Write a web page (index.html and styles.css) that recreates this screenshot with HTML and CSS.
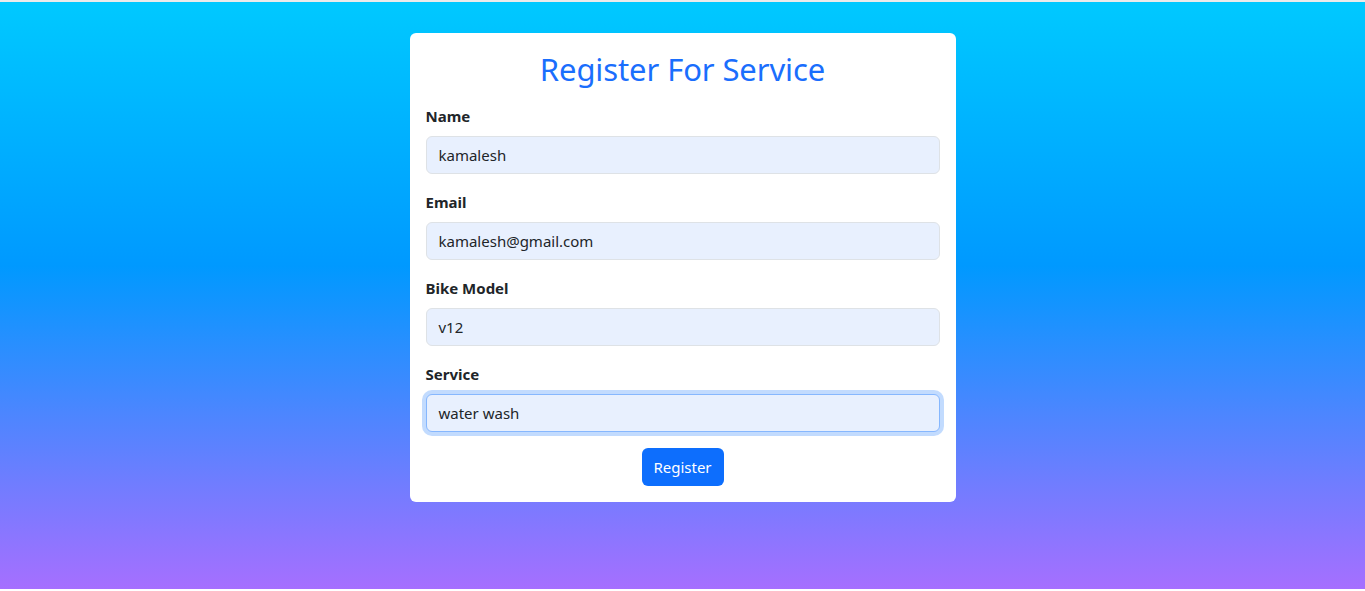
FILE: index.html
```html
<!DOCTYPE html>
<html lang="en">
<head>
<meta charset="utf-8">
<title>Register For Service</title>
<link rel="stylesheet" href="styles.css">
</head>
<body>
<div class="page">
  <form class="card">
    <h2 class="title">Register For Service</h2>
    <div class="group">
      <label class="label">Name</label>
      <div class="input">kamalesh</div>
    </div>
    <div class="group">
      <label class="label">Email</label>
      <div class="input">kamalesh@gmail.com</div>
    </div>
    <div class="group">
      <label class="label">Bike Model</label>
      <div class="input">v12</div>
    </div>
    <div class="group">
      <label class="label">Service</label>
      <div class="input focus">water wash</div>
    </div>
    <div class="actions">
      <button type="button" class="btn">Register</button>
    </div>
  </form>
</div>
</body>
</html>
```
FILE: styles.css
```css
html, body {
  margin: 0;
  padding: 0;
}
body {
  background: #ffffff;
  border-top: 2px solid #ebebeb;
  font-family: "Noto Sans", "Open Sans", sans-serif;
  color: #212529;
}
.page {
  height: 587px;
  box-sizing: border-box;
  padding-top: 31px;
  background: linear-gradient(180deg, #00c9ff 0%, #0099ff 45%, #a66fff 100%);
  display: flex;
  justify-content: center;
  align-items: flex-start;
}
.card {
  width: 546px;
  box-sizing: border-box;
  background: #fff;
  border-radius: 6px;
  padding: 16px;
}
.title {
  margin: 0 0 16px;
  text-align: center;
  color: #1a6efd;
  font-weight: 400;
  font-size: 31px;
  line-height: 39px;
  padding-top: 1px;
  height: 38px;
  letter-spacing: -0.1px;
}
.group {
  margin-bottom: 16px;
}
.label {
  display: block;
  font-weight: 700;
  font-size: 15px;
  line-height: 24px;
  margin-bottom: 8px;
}
.input {
  height: 38px;
  box-sizing: border-box;
  border: 1px solid #dee2e6;
  border-radius: 6px;
  background: #e8f0fe;
  padding: 0 12px;
  font-size: 15px;
  line-height: 36px;
  color: #212529;
}
.input.focus {
  border-color: #86b7fe;
  box-shadow: 0 0 0 4px rgba(13, 110, 253, 0.25);
}
.actions {
  display: flex;
  justify-content: center;
}
.btn {
  height: 38px;
  width: 82px;
  border: none;
  border-radius: 6px;
  background: #0d6efd;
  color: #fff;
  font-family: inherit;
  font-size: 15px;
  padding: 0;
}
```
